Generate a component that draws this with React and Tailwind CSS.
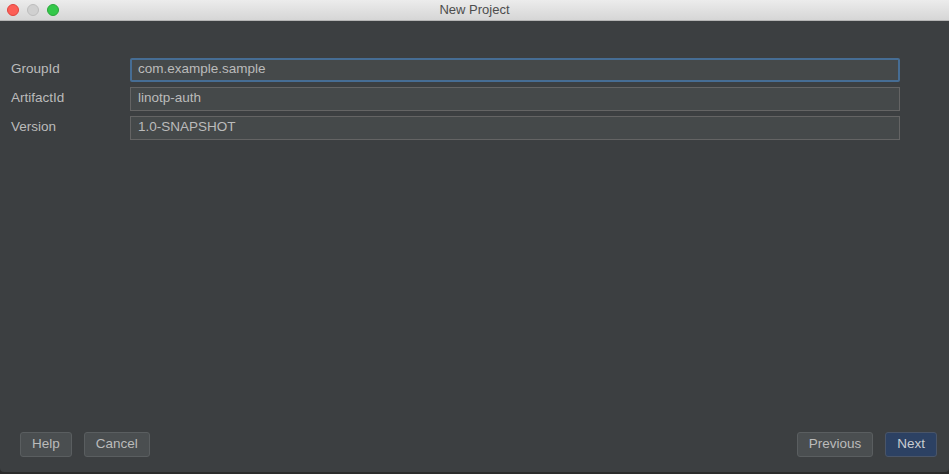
import React from 'react';

const Field = ({ label, value, focused }) => (
  <div className="flex items-center h-[29px]">
    <div className="w-[130px] pl-[11px] text-[13.5px] text-[#bbbbbb]">{label}</div>
    <div
      className={
        'w-[770px] h-[24px] flex items-center bg-[#45494a] text-[13.5px] text-[#bbbbbb] ' +
        (focused ? 'border-2 border-[#466d94] pl-[6px] rounded-[2px]' : 'border border-[#646464] pl-[7px]')
      }
    >
      {value}
    </div>
  </div>
);

const Btn = ({ children, primary }) => (
  <button
    className={
      'h-[25px] px-[11px] rounded-[3px] border text-[13.5px] ' +
      (primary
        ? 'bg-[#2c4163] border-[#4a5568] text-[#c8ccd2]'
        : 'bg-[#4a4e50] border-[#5a5e60] text-[#bbbbbb]')
    }
  >
    {children}
  </button>
);

export default function App() {
  return (
    <div
      className="w-[949px] h-[474px] flex flex-col bg-[#2b2b2b] overflow-hidden"
      style={{ fontFamily: '"Liberation Sans", Arial, sans-serif' }}
    >
      <div className="h-[21px] flex items-center relative bg-gradient-to-b from-[#ececec] to-[#d6d6d6] border-b border-[#b5b5b5]">
        <div className="flex gap-[8px] pl-[7px]">
          <span className="w-[12px] h-[12px] rounded-full bg-[#fc5f57] border border-[#e0443e]" />
          <span className="w-[12px] h-[12px] rounded-full bg-[#d0d0d0] border border-[#bdbdbd]" />
          <span className="w-[12px] h-[12px] rounded-full bg-[#34c84a] border border-[#2aa73b]" />
        </div>
        <div className="absolute inset-0 flex items-center justify-center text-[13px] text-[#4d4d4d]">
          New Project
        </div>
      </div>
      <div className="flex-1 bg-[#3c3f41] flex flex-col mb-[2px] rounded-b-[4px]">
        <div className="pt-[34px] flex flex-col">
          <Field label="GroupId" value="com.example.sample" focused />
          <Field label="ArtifactId" value="linotp-auth" />
          <Field label="Version" value="1.0-SNAPSHOT" />
        </div>
        <div className="flex-1" />
        <div className="flex items-center justify-between pl-[20px] pr-[12px] pb-[15px]">
          <div className="flex gap-[12px]">
            <Btn>Help</Btn>
            <Btn>Cancel</Btn>
          </div>
          <div className="flex gap-[12px]">
            <Btn>Previous</Btn>
            <Btn primary>Next</Btn>
          </div>
        </div>
      </div>
    </div>
  );
}
